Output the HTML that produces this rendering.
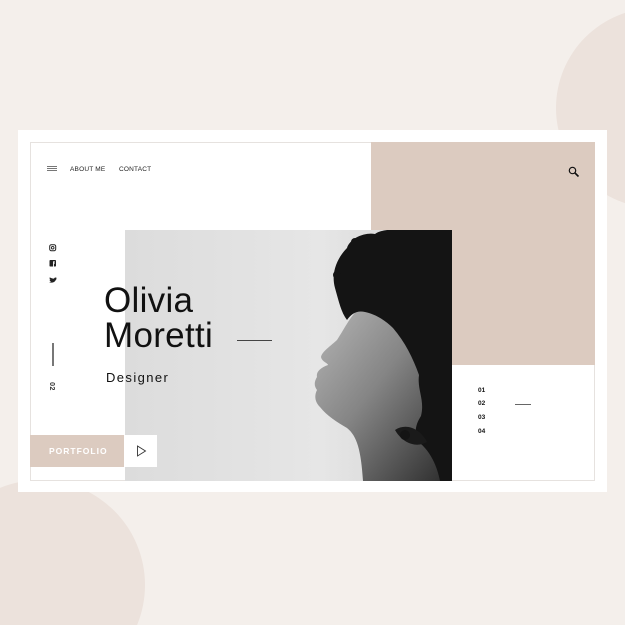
<!DOCTYPE html>
<html><head><meta charset="utf-8"><style>
*{margin:0;padding:0;box-sizing:border-box}
html,body{width:625px;height:625px;overflow:hidden}
body{background:#f4efeb;position:relative;font-family:"Liberation Sans",sans-serif}
.a{position:absolute}
.nav{font-size:6.5px;color:#222;letter-spacing:.2px}
.num{font-size:6.5px;font-weight:bold;color:#111;left:478px}
</style></head><body>
<svg class="a" style="left:0;top:0" width="625" height="625" viewBox="0 0 625 625">
<circle cx="40" cy="585" r="105" fill="#ece2dc"/>
<circle cx="656" cy="108" r="100" fill="#ece2dc"/>
</svg>
<div class="a" style="left:18px;top:130px;width:589px;height:362px;background:#fff"></div>
<div class="a" style="left:30px;top:142px;width:565px;height:339px;border:1px solid #e6e2df;background:#fff"></div>
<div class="a" style="left:371px;top:142px;width:224px;height:223px;background:#dccbc0"></div>
<svg class="a" style="left:125px;top:230px" width="327" height="251" viewBox="0 0 327 251">
<defs>
<linearGradient id="bg" x1="0" y1="0" x2="1" y2="0"><stop offset="0" stop-color="#dcdcdc"/><stop offset=".6" stop-color="#e6e6e6"/><stop offset="1" stop-color="#d0d0d0"/></linearGradient>
<linearGradient id="sk" x1="0" y1="0" x2="1" y2="1"><stop offset="0" stop-color="#b8b8b8"/><stop offset=".45" stop-color="#858585"/><stop offset="1" stop-color="#2a2a2a"/></linearGradient>
</defs>
<rect width="327" height="251" fill="url(#bg)"/>
<path d="M238 75 C226 84 220 98 212 110 C203 118 197 122 196 127 C197 132 203 133 203 135 C195 138 191 142 192 147 C189 152 189 156 192 160 C189 166 190 172 195 177 C202 186 212 192 222 198 C232 206 236 220 238 251 L327 251 L327 120 C300 90 270 70 238 75Z" fill="url(#sk)"/>
<path d="M210 58 C205 40 215 25 222 18 C225 8 240 2 250 4 C258 -2 275 0 290 -2 L327 0 L327 251 L315 251 C312 235 305 222 296 214 C288 206 290 195 296 186 C300 170 292 160 294 145 C288 128 280 112 268 98 C260 90 250 84 240 82 C232 80 226 84 222 90 C216 82 214 72 210 58Z" fill="#141414"/>
<path d="M270 200 C282 192 296 200 302 212 C292 218 278 214 270 200Z" fill="#1a1a1a"/>
<g fill="#141414"><circle cx="212" cy="45" r="4"/><circle cx="218" cy="30" r="3"/><circle cx="230" cy="12" r="4"/><circle cx="280" cy="205" r="5"/></g>
</svg>
<div class="a" style="left:47px;top:166px;width:10px;height:1px;background:#777;box-shadow:0 2px 0 #777,0 4px 0 #777"></div>
<div class="a nav" style="left:70px;top:166px">ABOUT ME</div>
<div class="a nav" style="left:119px;top:166px">CONTACT</div>
<svg class="a" style="left:568px;top:166px" width="12" height="12" viewBox="0 0 12 12"><circle cx="4.5" cy="4.5" r="3.2" fill="none" stroke="#111" stroke-width="1.2"/><path d="M7 7 L10.5 10.5" stroke="#111" stroke-width="1.6"/></svg>
<svg class="a" style="left:49px;top:244px" width="9" height="42" viewBox="0 0 9 42">
<rect x=".7" y=".7" width="6" height="6" rx="1.6" fill="none" stroke="#222" stroke-width="1"/><circle cx="3.7" cy="3.7" r="1.3" fill="none" stroke="#222" stroke-width=".9"/>
<rect x=".5" y="16" width="6.5" height="6.5" rx=".8" fill="#222"/><path d="M4.5 22.5 V19 H6 M4.5 19 V18 Q4.5 17.4 5.6 17.4" stroke="#fff" stroke-width=".9" fill="none"/>
<path d="M0 38 C2 39 5 39 6.5 36.5 C7 35.5 7.5 35 8 34.5 L7 34.6 L7.5 33.8 C6.5 33.3 5.5 33.6 5 34.6 C3 34.6 1.5 33.8 .8 33.2 C.3 34.5 .8 35.5 1.6 36 C1 36 .8 36 .5 35.8 C.6 36.8 1.5 37.4 2 37.5 C1.5 37.8 .8 38 0 38Z" fill="#222"/>
</svg>
<div class="a" style="left:52px;top:343px;width:1.5px;height:23px;background:#777"></div>
<div class="a" style="left:47px;top:383px;font-size:7px;font-weight:bold;color:#333;transform:rotate(90deg);letter-spacing:.5px">02</div>
<div class="a" style="left:104px;top:283px;font-size:35px;line-height:35px;color:#111;letter-spacing:.3px">Olivia<br>Moretti</div>
<div class="a" style="left:237px;top:340px;width:35px;height:1px;background:#444"></div>
<div class="a" style="left:106px;top:370px;font-size:13px;color:#111;letter-spacing:1.4px">Designer</div>
<div class="a" style="left:30px;top:435px;width:94px;height:32px;background:#dccbc0;color:#fff;font-size:8.5px;font-weight:bold;letter-spacing:1px;line-height:32px;padding-left:19px">PORTFOLIO</div>
<div class="a" style="left:124px;top:435px;width:33px;height:32px;background:#fff"></div>
<svg class="a" style="left:136px;top:445px" width="11" height="12" viewBox="0 0 11 12"><path d="M1.5 1 L9.5 6 L1.5 11Z" fill="none" stroke="#333" stroke-width=".9"/></svg>
<div class="a num" style="top:387px">01</div>
<div class="a num" style="top:400px">02</div>
<div class="a num" style="top:414px">03</div>
<div class="a num" style="top:428px">04</div>
<div class="a" style="left:515px;top:404px;width:16px;height:1px;background:#666"></div>
</body></html>
